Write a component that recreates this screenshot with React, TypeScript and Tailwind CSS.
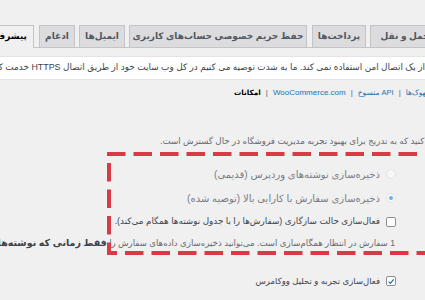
import React from "react";

function Tab({ label, w, active = false, gap, size = "text-[9px]" }: { label: string; w: string; active?: boolean; gap: string; size?: string }) {
  return (
    <div
      className={
        active
          ? `${w} ${gap} ${size} h-[23px] mb-[-1px] shrink-0 flex items-center justify-start pr-[6px] border border-b-0 border-[#c3c4c7] bg-[#f0f0f1] text-black font-bold whitespace-nowrap overflow-hidden`
          : `${w} ${gap} ${size} h-[22px] shrink-0 flex items-center justify-center border border-b-0 border-[#c3c4c7] bg-[#dcdcde] text-[#50575e] font-bold whitespace-nowrap overflow-hidden`
      }
    >
      {label}
    </div>
  );
}

function Radio({ checked = false }: { checked?: boolean }) {
  return (
    <span className="w-[10px] h-[10px] shrink-0 rounded-full border border-[#e2e3e5] bg-[#f7f7f8] flex items-center justify-center">
      {checked && <span className="w-[4px] h-[4px] rounded-full bg-[#72aee6]" />}
    </span>
  );
}

function Checkbox({ checked = false }: { checked?: boolean }) {
  return (
    <span className="w-[10px] h-[10px] shrink-0 rounded-[2px] border border-[#8c8f94] bg-white flex items-center justify-center">
      {checked && (
        <svg width="9" height="9" viewBox="0 0 10 10">
          <path d="M2 5.2 L4.2 7.4 L8.4 2.4" fill="none" stroke="#2271b1" strokeWidth="1.6" />
        </svg>
      )}
    </span>
  );
}

export default function App() {
  return (
    <div
      dir="rtl"
      className="relative w-[425px] h-[300px] overflow-hidden bg-[#f0f0f1] text-[#3c434a] font-['Liberation_Sans','DejaVu_Sans',sans-serif]"
    >
      {/* tabs */}
      <div className="pt-[25px]">
        <div className="flex items-end border-b border-[#c3c4c7] mr-[-15px]">
          <Tab label="حمل و نقل" w="w-[70px]" gap="ml-[4px]" />
          <Tab label="پرداخت‌ها" w="w-[54px]" gap="ml-[5px]" />
          <Tab label="حفظ حریم خصوصی حساب‌های کاربری" w="w-[178px]" gap="ml-[4px]" />
          <Tab label="ایمیل‌ها" w="w-[46px]" gap="ml-[4px]" />
          <Tab label="ادغام" w="w-[36px]" gap="ml-[5px]" />
          <Tab label="پیشرفته" w="w-[60px]" gap="ml-0" active />
        </div>
      </div>

      {/* notice */}
      <div className="mt-[8px] h-[24px] bg-white border-y border-[#e4e4e6] flex items-center whitespace-nowrap text-[8.9px] text-[#3c434a]">
        <span>
          از یک اتصال امن استفاده نمی کند. ما به شدت توصیه می کنیم در کل وب سایت خود از طریق اتصال HTTPS خدمت کنید تا امنیت مشتریان حفظ شود.
        </span>
      </div>

      {/* subsubsub */}
      <div className="mt-[6px] h-[14px] flex items-center justify-end pl-[234px] gap-[5px] whitespace-nowrap text-[8px]">
        <span className="text-[#2271b1] shrink-0 text-[7.5px]">وبهوک‌ها</span>
        <span className="text-[#50575e] shrink-0">|</span>
        <span className="text-[#2271b1] shrink-0 text-[7.5px]">API منسوخ</span>
        <span className="text-[#50575e] shrink-0">|</span>
        <span className="text-[#2271b1] shrink-0">WooCommerce.com</span>
        <span className="text-[#50575e] shrink-0">|</span>
        <span className="text-black font-bold shrink-0 text-[7.3px]">امکانات</span>
      </div>

      {/* section description */}
      <div className="mt-[35px] h-[14px] flex items-center justify-end pl-[160px] whitespace-nowrap text-[8.7px] text-[#646970]">
        <span className="shrink-0">
          ویژگی‌های آزمایشی را طبقه‌بندی کنید که به تدریج برای بهبود تجربه مدیریت فروشگاه در حال گسترش است.
        </span>
      </div>

      {/* options */}
      <div className="mt-[13px] flex flex-col">
        <div className="h-[24px] flex items-center gap-[6px] pr-[29px] whitespace-nowrap text-[10px] text-[#787c82]">
          <Radio />
          <span>ذخیره‌سازی نوشته‌های وردپرس (قدیمی)</span>
        </div>
        <div className="h-[24px] flex items-center gap-[6px] pr-[29px] whitespace-nowrap text-[10px] text-[#787c82]">
          <Radio checked />
          <span>ذخیره‌سازی سفارش با کارایی بالا (توصیه شده)</span>
        </div>
        <div className="h-[24px] flex items-center gap-[6px] pr-[29px] whitespace-nowrap text-[8.8px] text-[#3c434a]">
          <Checkbox />
          <span>فعال‌سازی حالت سازگاری (سفارش‌ها را با جدول نوشته‌ها همگام می‌کند).</span>
        </div>
        <div className="mt-[2px] h-[14px] flex items-center pr-[30px] whitespace-nowrap text-[8.6px] text-[#646970]">
          <span className="shrink-0">
            1 سفارش در انتظار همگام‌سازی است. می‌توانید ذخیره‌سازی داده‌های سفارش را{" "}
            <b className="text-[#3c434a] text-[9.5px]">فقط زمانی که نوشته‌ها و سفارش‌ها همگام باشند</b> تغییر دهید.
          </span>
        </div>
        <div className="mt-[19px] h-[24px] flex items-center gap-[6px] pr-[29px] whitespace-nowrap text-[8.5px] text-[#3c434a]">
          <Checkbox checked />
          <span>فعال‌سازی تجربه و تحلیل ووکامرس</span>
        </div>
      </div>

      {/* red dashed annotation */}
      <svg className="absolute left-0 top-0 pointer-events-none" width="425" height="300">
        <line x1="107" y1="154" x2="440" y2="154" stroke="#d83b43" strokeWidth="4" strokeDasharray="18.5 8" />
        <line x1="109" y1="163" x2="109" y2="255" stroke="#d83b43" strokeWidth="4" strokeDasharray="18.5 8" />
        <line x1="107" y1="253" x2="440" y2="253" stroke="#d83b43" strokeWidth="4" strokeDasharray="18.5 8" strokeDashoffset="8.5" />
      </svg>
    </div>
  );
}
